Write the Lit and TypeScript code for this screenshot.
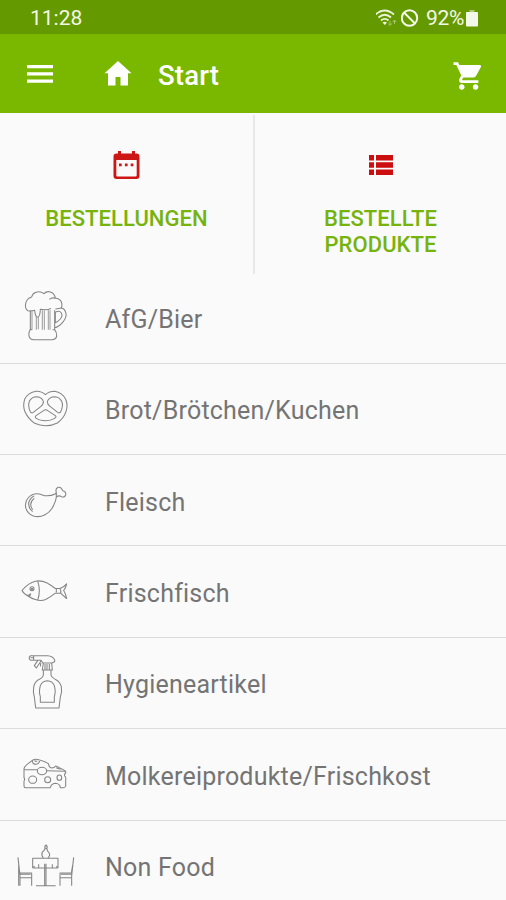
import { LitElement, html, svg, css, SVGTemplateResult } from "lit";
import { customElement, property } from "lit/decorators.js";

interface Category {
  label: string;
  top: number;
  art: SVGTemplateResult;
}

const beer = svg`
  <path d="M91 90 V148 Q84 158 88 170 Q90 178 100 178 H158 Q168 177 170 168 Q171 156 164 148 V142 Q176 140 188 126 Q200 112 198 99 Q194 84 184 83 Q189 70 181 60 Q174 53 166 54 Q164 37 148 34 Q138 33 132 40 Q120 31 108 36 Q97 40 95 50 Q79 55 77 70 Q74 86 84 91 Q93 93 104 90 Q106 110 113 111 Q120 110 121 87 Q142 91 153 84 M148 57 Q157 50 166 54 M88 150 Q91 147 97 148 M158 148 H164"/>
  <path d="M164 90 V142 M166 86 Q178 85 184 83 M166 96 Q178 89 184 98 Q189 106 181 116 Q174 124 166 127 Z"/>
  <path class="soft" d="M96 92 V147 M109 106 V148 M115 111 V147 M127 90 V148 M133 90 V148 M145 90 V148 M150 90 V148"/>`;

const pretzel = svg`
  <path d="M136 59 Q124 48 108 49 Q84 53 74 73 Q68 91 74 108 Q83 130 104 145 Q119 152 137 152 Q157 152 172 144 Q190 132 198 110 Q205 91 197 73 Q187 53 164 49 Q148 49 136 59 Z"/>
  <path d="M91 110 Q83 93 88 79 Q95 65 111 65 Q127 67 130 80 Q131 88 122 95 L100 112 Q94 116 91 110 Z M182 110 Q191 93 185 79 Q178 65 162 65 Q146 67 142 80 Q142 88 151 95 L173 112 Q179 116 182 110 Z M108 122 L132 106 Q137 103 142 106 L166 122 Q171 126 164 130 Q153 137 137 137 Q119 137 109 130 Q103 126 108 122 Z"/>`;

const drumstick = svg`
  <path d="M167 84 Q151 92 134 90 L118 85 Q98 82 84 97 Q74 109 77 125 Q81 143 98 150 Q117 157 135 147 Q153 138 161 119 Q168 105 169 94 Q177 88 184 93 Q193 97 197 88 Q199 77 188 75 Q184 63 174 65 Q165 70 169 79 Z"/>
  <path d="M102 91 Q85 101 86 117 Q88 131 98 138 M103 98 Q93 105 92 116 Q92 126 98 132 M169 81 V93"/>`;

const fish = svg`
  <path d="M66 106 Q85 83 106 78 Q124 75 140 83 Q154 91 166 100 H180 Q192 96 200 86 Q198 97 191 106 Q198 117 200 130 Q190 122 182 114 H166 Q151 126 137 133 Q123 139 106 133 Q97 131 86 124 Q71 116 66 106 Z M79 119 Q85 123 92 115 M86 124 Q92 121 92 115"/>
  <path d="M113 78 Q118 92 118 106 Q118 122 113 135 M169 101 V112 M180 101 Q184 107 182 114"/>
  <circle cx="96" cy="101" r="6"/><circle cx="96" cy="101" r="2"/>`;

const spray = svg`
  <path d="M88 37 L92 33 H143 Q159 34 164 46 V51 L155 55 H129 L123 47 H92 L88 43 Z M101 33 V45 M92 39 H101 M113 48 L103 63 L109 70 L123 49 M123 55 Q120 60 122 65"/>
  <path d="M130 55 L127 76 H157 L155 55 M135 58 V76 M141 58 V76 M148 58 V76 M130 77 V91 Q129 100 114 106 Q103 113 101 128 Q98 143 103 157 L107 190 H177 L181 157 Q187 143 184 126 Q180 111 168 105 Q154 98 153 91 V77"/>
  <path d="M121 173 V156 Q116 142 121 123 Q126 109 142 108 Q158 109 163 123 Q168 142 163 156 V173 Z"/>`;

const cheese = svg`
  <path d="M72 101 Q72 94 85 84 L99 74 Q107 69 119 74 Q136 78 146 86 Q146 96 155 98 Q163 98 167 92 Q175 94 181 99 Q193 104 197 108 V113 Q192 116 194 122 Q199 124 197 134 V152 Q196 157 190 157 H181 Q180 145 166 144 Q153 146 151 157 H76 Q72 157 72 151 V137 Q76 132 72 127 Z"/>
  <path d="M72 103 H111 M140 106 L196 108 M97 77 Q98 87 108 87 Q117 86 119 77 M104 75 Q105 80 112 77 M168 97 L182 102"/>
  <ellipse cx="126" cy="107" rx="14" ry="11"/><ellipse cx="98" cy="133" rx="12" ry="11"/><circle cx="143" cy="133" r="9"/><ellipse cx="178" cy="127" rx="7" ry="8"/>`;

const table = svg`
  <path d="M98 159 V130 H174 V159 M98 159 H174 M98 155 H105 M168 155 H174 M116 148 V158 M157 148 V158"/>
  <path d="M134 146 V211 M138 146 V211 M108 212 H167 M130 129 Q123 120 127 111 Q134 106 134 101 H141 Q140 107 147 113 Q152 121 144 129 M136 101 Q132 94 138 90 Q144 95 140 101"/>
  <path d="M54 127 L60 182 V212 M56 150 V212 M60 174 H95 V212 M60 178 H92 M60 188 H95 M221 127 L215 182 V212 M218 150 L214 174 M180 212 V174 H214 M183 178 H214 M180 188 H214"/>`;

const categories: Category[] = [
  { label: "AfG/Bier", top: -25, art: beer },
  { label: "Brot/Brötchen/Kuchen", top: -36, art: pretzel },
  { label: "Fleisch", top: -32, art: drumstick },
  { label: "Frischfisch", top: -27.5, art: fish },
  { label: "Hygieneartikel", top: -23, art: spray },
  { label: "Molkereiprodukte/Frischkost", top: -19, art: cheese },
  { label: "Non Food", top: 15, art: table },
];

@customElement("status-bar")
export class StatusBar extends LitElement {
  static styles = css`
    :host { display: flex; flex: none; align-items: center; height: 34px; box-sizing: border-box; padding: 2px 28px 0 30px; background: #659900; color: #f4f8e8; font-size: 21px; }
    .time { flex: 1; }
    .wifi { width: 23px; height: 20px; }
    .block { width: 20px; height: 20px; margin: 0 5px 0 2px; }
    .level { letter-spacing: -0.3px; }
    .battery { width: 12px; height: 17px; margin-left: 2px; }
  `;
  render() {
    return html`
      <span class="time">11:28</span>
      <svg class="wifi" viewBox="0 0 23 20" fill="none" stroke="#edf4dc" stroke-width="1.7">
        <g transform="translate(-1.500 0)">
          <path d="M1 6.5Q10 -1.500 19.500 6.500M4 9.500Q10.300 4 16.500 9.500M6.500 12.500Q10.300 9.300 14 12.500"/>
          <path d="M8 14.500Q10.300 13 12.500 14.500L10.300 17Z" fill="#edf4dc" stroke="none"/>
          <path d="M15.500 13v4M13.800 15.500l1.700 2 1.700-2M20 16v-4M18.300 14l1.700-2 1.700 2" stroke="#a9c66b" stroke-width="1"/>
        </g>
      </svg>
      <svg class="block" viewBox="1.500 0 20 20" fill="none" stroke="#f4f8e8" stroke-width="2">
        <circle cx="10" cy="10" r="7.700"/><path d="M4.500 4.500L15.500 15.500"/>
      </svg>
      <span class="level">92%</span>
      <svg class="battery" viewBox="0 0 12 18" preserveAspectRatio="none"><path d="M3.500 0h5v2H3.500z" fill="#b4cc80"/><path d="M1 2H11q1 0 1 1V16.500q0 1-1 1H1q-1 0-1-1V3q0-1 1-1z" fill="#f4f8e8"/></svg>
    `;
  }
}

@customElement("app-toolbar")
export class AppToolbar extends LitElement {
  static styles = css`
    :host { display: flex; flex: none; align-items: center; height: 79px; box-sizing: border-box; padding: 3px 23px 0 27px; background: #7ab800; color: #fff; }
    svg { fill: #fff; display: block; }
    .menu { width: 26px; height: 20px; margin-top: -3px; }
    .home { width: 28px; height: 26px; margin: -4px 0 0 51px; }
    .title { flex: 1; margin: 2px 0 0 26px; font-size: 27.5px; font-weight: 500; line-height: 32px; letter-spacing: 0.2px; }
    .cart { width: 30px; height: 30px; margin-top: 1px; }
  `;
  render() {
    return html`
      <svg class="menu" viewBox="0 0 26 20"><path d="M0 1h26v3.200H0zM0 8.300h26v3.200H0zM0 15.500h26v3.200H0z"/></svg>
      <svg class="home" viewBox="0 0 28 26"><path d="M14 1L.500 13.300H4V25.500h7.500V17h5v8.500H24V13.300h3.500z"/></svg>
      <h1 class="title">Start</h1>
      <svg class="cart" viewBox="0.600 1.500 21.800 21"><path d="M7 18c-1.100 0-1.990.9-1.990 2S5.900 22 7 22s2-.9 2-2-.9-2-2-2zM1 2v2h2l3.600 7.590-1.350 2.450c-.16.280-.25.610-.25.960 0 1.100.9 2 2 2h12v-2H7.420c-.14 0-.25-.11-.25-.25l.03-.12.900-1.630h7.450c.75 0 1.410-.41 1.750-1.030l3.580-6.490c.08-.14.120-.31.120-.480 0-.55-.45-1-1-1H5.210l-.94-2H1zm16 16c-1.100 0-1.990.9-1.990 2s.89 2 1.990 2 2-.9 2-2-.9-2-2-2z"/></svg>
    `;
  }
}

@customElement("category-row")
export class CategoryRow extends LitElement {
  @property({ attribute: false }) item!: Category;
  static styles = css`
    :host { display: flex; align-items: center; flex: none; height: 91.4px; box-sizing: border-box; border-bottom: 1.5px solid #dcdcdc; color: #747474; }
    .art { flex: none; width: 100px; height: 91.4px; margin-right: 5px; fill: none; stroke: #858585; stroke-width: 3.2; stroke-linejoin: round; }
    .soft { stroke: #a0a0a0; }
    .label { font-size: 25px; letter-spacing: 0.22px; line-height: 30px; white-space: nowrap; padding-top: 4.5px; }
  `;
  render() {
    return html`
      <svg class="art" viewBox="0 ${this.item.top} 300 274.2">${this.item.art}</svg>
      <span class="label">${this.item.label}</span>
    `;
  }
}

@customElement("app-root")
export class AppRoot extends LitElement {
  static styles = css`
    :host { display: flex; flex-direction: column; width: 506px; height: 900px; overflow: hidden; background: #fafafa; font-family: Roboto, sans-serif; }
    .tabs { display: grid; grid-template-columns: 253px 253px; flex: none; height: 159.300px; }
    .tab { display: flex; flex-direction: column; align-items: center; padding-top: 37px; text-align: center; color: #76b30c; font-size: 22px; font-weight: 500; line-height: 26px; letter-spacing: 0.05px; }
    .tab + .tab { border-left: 2px solid #e8e8e8; margin: 2px 0 -2px; padding-top: 35px; }
    .glyph { width: 28px; height: 30px; margin-bottom: 26px; }
    .list { display: flex; flex-direction: column; }
  `;
  render() {
    return html`
      <status-bar></status-bar>
      <app-toolbar></app-toolbar>
      <nav class="tabs">
        <div class="tab">
          <svg class="glyph" viewBox="0.500 0 28 30">
            <path d="M5.500 1h3v2.500h11V1h3v2.500H24q3 0 3 3V26q0 3-3 3H4q-3 0-3-3V6.500q0-3 3-3h1.500zM3.800 10v15.200q0 1.200 1.200 1.200h18q1.200 0 1.200-1.200V10z" fill="#cc1714" fill-rule="evenodd"/>
            <path d="M6.500 13.500h2.700v2.700H6.500zM12.400 13.500h2.700v2.700h-2.700zM18.200 13.500h2.700v2.700h-2.700z" fill="#cc1714"/>
          </svg>
          <span>BESTELLUNGEN</span>
        </div>
        <div class="tab">
          <svg class="glyph" viewBox="0 0 28 30">
            <path d="M2 5h5v5.500H2zM9 5h17v5.500H9zM2 12.200h5v5.500H2zM9 12.200h17v5.500H9zM2 19.400h5v5.500H2zM9 19.400h17v5.500H9z" fill="#cc0e0e"/>
          </svg>
          <span>BESTELLTE<br />PRODUKTE</span>
        </div>
      </nav>
      <main class="list">${categories.map((c) => html`<category-row .item=${c}></category-row>`)}</main>
    `;
  }
}
